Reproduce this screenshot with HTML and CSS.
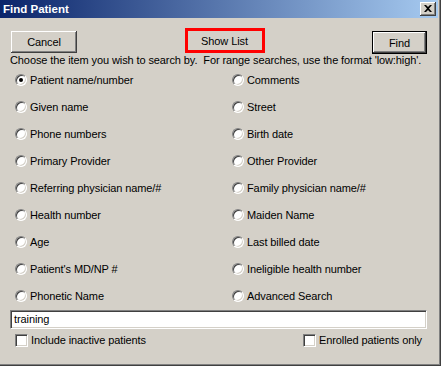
FILE: index.html
```html
<!DOCTYPE html>
<html>
<head>
<meta charset="utf-8">
<link rel="stylesheet" href="styles.css">
</head>
<body>
<div class="window">
  <div class="titlebar">
    <span class="title">Find Patient</span>
    <span class="close"><svg width="8" height="7" viewBox="0 0 8 7"><path d="M0 0h2l2 2 2-2h2L5 3.5 8 7H6L4 5 2 7H0l3-3.5z" fill="#000"/></svg></span>
  </div>
  <div class="content">
    <div class="buttons">
      <div class="btn cancel">Cancel</div>
      <div class="btn showlist">Show List</div>
      <div class="btn find">Find</div>
    </div>
    <div class="hint">Choose the item you wish to search by.&nbsp; For range searches, use the format 'low:high'.</div>
    <div class="options">
      <label class="opt"><span class="radio checked"></span>Patient name/number</label>
      <label class="opt"><span class="radio"></span>Comments</label>
      <label class="opt"><span class="radio"></span>Given name</label>
      <label class="opt"><span class="radio"></span>Street</label>
      <label class="opt"><span class="radio"></span>Phone numbers</label>
      <label class="opt"><span class="radio"></span>Birth date</label>
      <label class="opt"><span class="radio"></span>Primary Provider</label>
      <label class="opt"><span class="radio"></span>Other Provider</label>
      <label class="opt"><span class="radio"></span>Referring physician name/#</label>
      <label class="opt"><span class="radio"></span>Family physician name/#</label>
      <label class="opt"><span class="radio"></span>Health number</label>
      <label class="opt"><span class="radio"></span>Maiden Name</label>
      <label class="opt"><span class="radio"></span>Age</label>
      <label class="opt"><span class="radio"></span>Last billed date</label>
      <label class="opt"><span class="radio"></span>Patient's MD/NP #</label>
      <label class="opt"><span class="radio"></span>Ineligible health number</label>
      <label class="opt"><span class="radio"></span>Phonetic Name</label>
      <label class="opt"><span class="radio"></span>Advanced Search</label>
    </div>
    <div class="field">training</div>
    <div class="checks">
      <label class="chk"><span class="box"></span>Include inactive patients</label>
      <label class="chk"><span class="box"></span>Enrolled patients only</label>
    </div>
  </div>
</div>
</body>
</html>
```
FILE: styles.css
```css
* { box-sizing: border-box; }
html, body { margin: 0; padding: 0; background: #d4d0c8; }
body {
  font-family: "Liberation Sans", Arial, sans-serif;
  font-size: 11px;
  letter-spacing: -0.1px;
  color: #000;
}
.window {
  width: 441px;
  height: 366px;
  background: #d4d0c8;
  box-shadow: inset -1px -1px 0 #404040, inset -2px -2px 0 #808080;
  overflow: hidden;
}
.titlebar {
  height: 18px;
  margin-right: 3px;
  background: linear-gradient(to right, #0a246a, #a6caf0);
  display: flex;
  align-items: center;
  justify-content: space-between;
  padding: 0 2px 0 3px;
}
.title {
  color: #fff;
  font-weight: bold;
  font-size: 11.5px;
  letter-spacing: 0;
}
.close {
  width: 16px;
  height: 14px;
  background: #d4d0c8;
  display: flex;
  align-items: center;
  justify-content: center;
  box-shadow: inset -1px -1px 0 #404040, inset 1px 1px 0 #fff, inset -2px -2px 0 #808080;
  padding-bottom: 1px;
}
.content {
  padding: 0 14px 0 10px;
}
.buttons {
  display: flex;
  justify-content: space-between;
  align-items: flex-start;
  margin-top: 10px;
  height: 26px;
}
.btn {
  display: flex;
  align-items: center;
  justify-content: center;
  height: 22px;
  background: #d4d0c8;
}
.cancel {
  width: 66px;
  margin-top: 3px;
  margin-left: 1px;
  box-shadow: inset -1px -1px 0 #404040, inset 1px 1px 0 #fff, inset -2px -2px 0 #808080;
}
.showlist {
  width: 80px;
  height: 25px;
  border: 3px solid #f00;
  padding-top: 1px;
}
.find {
  width: 55px;
  height: 23px;
  margin-top: 3px;
  border: 1px solid #000;
  box-shadow: inset -1px -1px 0 #404040, inset 1px 1px 0 #fff, inset -2px -2px 0 #808080;
}
.hint {
  margin-top: 0;
  line-height: 12px;
  height: 12px;
  white-space: nowrap;
}
.options {
  display: grid;
  grid-template-columns: 217px 1fr;
  grid-auto-rows: 27px;
  padding-left: 5px;
}
.opt {
  display: flex;
  align-items: center;
  gap: 3px;
}
.radio {
  width: 12px;
  height: 12px;
  border-radius: 50%;
  background: #fff;
  border: 1px solid;
  border-color: #808080 #fff #fff #808080;
  box-shadow: inset 1px 1px 0 #404040, inset -1px -1px 0 #d4d0c8;
  position: relative;
  flex: none;
}
.radio.checked::after {
  content: "";
  position: absolute;
  left: 3px;
  top: 3px;
  width: 4px;
  height: 4px;
  border-radius: 50%;
  background: #000;
}
.field {
  margin-top: 1px;
  height: 19px;
  width: 417px;
  background: #fff;
  border: 1px solid;
  border-color: #808080 #fff #fff #808080;
  box-shadow: inset 1px 1px 0 #404040, inset -1px -1px 0 #d4d0c8;
  padding: 0 0 0 3px;
  line-height: 17px;
}
.checks {
  display: flex;
  justify-content: space-between;
  align-items: center;
  height: 22px;
  padding: 0 5px 0 5px;
}
.chk {
  display: flex;
  align-items: center;
  gap: 3px;
}
.box {
  width: 13px;
  height: 13px;
  background: #fff;
  border: 1px solid;
  border-color: #808080 #fff #fff #808080;
  box-shadow: inset 1px 1px 0 #404040, inset -1px -1px 0 #d4d0c8;
  flex: none;
}
```
